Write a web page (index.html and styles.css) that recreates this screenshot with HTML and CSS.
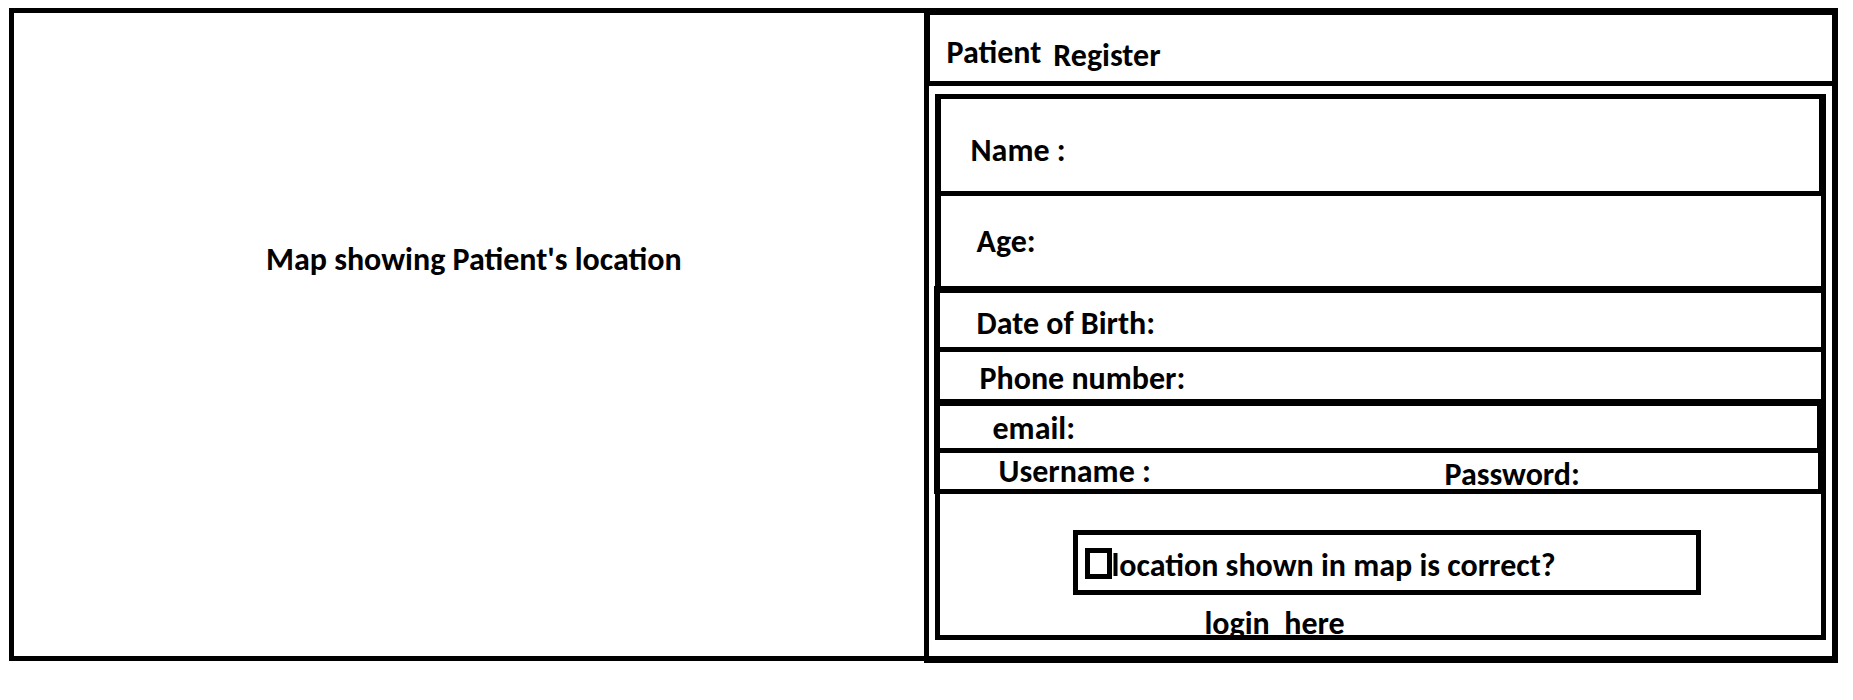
FILE: index.html
```html
<!DOCTYPE html>
<html lang="en">
<head>
<meta charset="utf-8">
<title>Patient Register</title>
<link rel="stylesheet" href="styles.css">
</head>
<body>
<main class="page">
  <section class="map">
    <p class="map-caption">Map showing Patient's location</p>
  </section>
  <section class="register">
    <h1 class="title"><span class="title-first">Patient</span> <span class="title-second">Register</span></h1>
    <form class="form">
      <div class="row row-name">
        <label for="name">Name :</label>
        <input class="field" id="name" type="text">
      </div>
      <div class="row row-age">
        <label for="age">Age:</label>
        <input class="field" id="age" type="text">
      </div>
      <div class="details">
        <div class="row row-birth">
          <label for="birth">Date of Birth:</label>
          <input class="field" id="birth" type="text">
        </div>
        <div class="row row-phone">
          <label for="phone">Phone number:</label>
          <input class="field" id="phone" type="tel">
        </div>
        <div class="row row-email">
          <label for="email">email:</label>
          <input class="field" id="email" type="email">
        </div>
        <div class="row row-account">
          <div class="pair pair-username">
            <label for="username">Username :</label>
            <input class="field" id="username" type="text">
          </div>
          <div class="pair pair-password">
            <label for="password">Password:</label>
            <input class="field" id="password" type="password">
          </div>
        </div>
      </div>
      <div class="footer">
        <div class="confirm">
          <input class="tick" id="confirm" type="checkbox">
          <label for="confirm">location shown in map is correct?</label>
        </div>
        <a class="login" href="#">login  here</a>
      </div>
    </form>
  </section>
</main>
</body>
</html>
```
FILE: styles.css
```css
* {
  box-sizing: border-box;
}

body {
  margin: 0;
  background: #fff;
  color: #000;
  font: bold 32px/32px Calibri, Carlito, Lato, sans-serif;
}

.page {
  display: grid;
  grid-template-columns: minmax(0, 1fr) minmax(0, 1fr);
  align-items: start;
  padding: 8px 15px 37px 9px;
}

.map {
  align-self: stretch;
  margin-bottom: 2px;
  padding-top: 231px;
  border: 5px solid #000;
  border-right: 0;
}

.map-caption {
  margin: 0;
  padding-left: 252px;
}

.register {
  border: solid #000;
  border-width: 7px 6px 7px 5px;
}

.title {
  display: flex;
  gap: 12px;
  margin: 0;
  padding: 22px 16px 9px 17px;
  border-bottom: 5px solid #000;
  border-left: 1px solid #000;
  font-size: 32px;
}

.title-second {
  padding-top: 3px;
}

.form {
  margin: 8px 6px 16px;
  border: 5px solid #000;
}

.row {
  display: flex;
  border-bottom: 5px solid #000;
}

.row label,
.pair label {
  white-space: nowrap;
}

.field {
  flex: 1;
  min-width: 0;
  height: 32px;
  margin: 0 0 0 12px;
  padding: 0;
  border: 0;
  outline: 0;
  background: transparent;
  font: inherit;
}

.row-name {
  padding: 36px 0 24px 30px;
  border-left: 1px solid #000;
  border-right: 2px solid #000;
}

.row-age {
  padding: 30px 0 28px 36px;
  border-bottom: 0;
  border-left: 1px solid #000;
}

.details {
  margin-left: -6px;
  border-top: 7px solid #000;
  border-left: 6px solid #000;
}

.row-birth {
  padding: 15px 0 7px 37px;
}

.row-phone {
  padding: 11px 0 4px 40px;
  border-bottom-width: 7px;
}

.row-email {
  padding: 7px 0 3px 53px;
  border-right: 4px solid #000;
}

.row-account {
  padding: 3px 0 0 59px;
  border-right: 3px solid #000;
}

.pair {
  display: flex;
  min-width: 0;
}

.pair-username {
  flex: 0 0 446px;
  padding-bottom: 1px;
}

.pair-password {
  flex: 1;
  margin-bottom: -2px;
  padding-top: 3px;
}

.footer {
  padding: 36px 120px 0 133px;
  overflow: hidden;
}

.confirm {
  display: flex;
  align-items: flex-start;
  padding: 13px 7px 8px;
  border: 5px solid #000;
}

.confirm label {
  padding-top: 2px;
}

.tick {
  appearance: none;
  flex: none;
  width: 27px;
  height: 31px;
  margin: 0;
  border: 5px solid #000;
  background: #fff;
}

.tick:checked {
  background: #000;
}

.login {
  display: block;
  width: fit-content;
  margin: 13px 0 -5px 132px;
  color: inherit;
  text-decoration: none;
  white-space: pre;
}
```
